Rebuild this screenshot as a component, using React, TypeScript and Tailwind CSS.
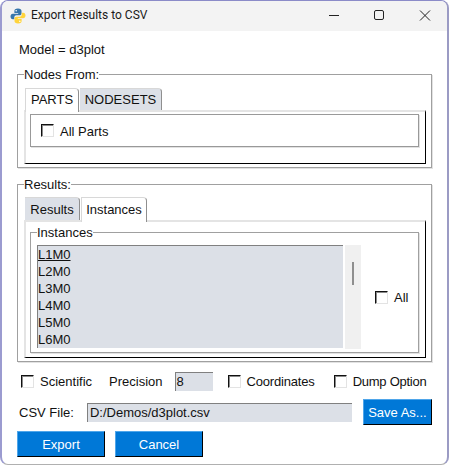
import React from "react";

function Box({ className = "" }: { className?: string }) {
  return (
    <span className={"block w-[13px] h-[13px] shrink-0 bg-white border-t border-l border-r border-b border-t-[#111] border-l-[#111] border-r-[#e3e3e3] border-b-[#e3e3e3] shadow-[inset_1px_1px_0_#8a8a8a] " + className} />
  );
}

function Btn({ label, cls }: { label: string; cls: string }) {
  return (
    <div className={"flex items-center justify-center bg-[#0078d7] text-white border-t border-l border-t-[#4fa6ea] border-l-[#4fa6ea] border-r border-b border-r-black border-b-black " + cls}>
      {label}
    </div>
  );
}

function Tab({ label, active, cls }: { label: string; active?: boolean; cls: string }) {
  return (
    <div className={"flex items-center justify-center h-[22px] rounded-tr-[4px] border-t border-r border-t-[#d8d8d8] border-r-[#8f8f8f] " + (active ? "bg-white border-l border-l-[#d8d8d8] relative z-10 h-[24px] -mb-[2px] pb-[2px] " : "bg-[#dce0e7] ") + cls}>
      {label}
    </div>
  );
}

const frame = "border border-[#a0a0a0] shadow-[1px_1px_0_#e2e2e2] min-w-0";
const panel = "border-t-2 border-l-2 border-t-[#e4e4e4] border-l-[#e4e4e4] border-r border-b border-r-black border-b-black";
const entry = "bg-[#dce0e7] border-t border-l border-t-[#808080] border-l-[#808080]";

const rows = ["L1M0", "L2M0", "L3M0", "L4M0", "L5M0", "L6M0"];

export default function App() {
  return (
    <div className="w-[449px] h-[465px] bg-white overflow-hidden" style={{ fontFamily: '"Liberation Sans", Arial, sans-serif' }}>
      <div className="w-[449px] h-[465px] flex flex-col rounded-[8px] border-t border-l-2 border-r-2 border-b border-t-[#8b8bc8] border-l-[#9b9bd0] border-r-[#9b9bc4] border-b-[#b0b0b0] overflow-hidden text-[13px] leading-[15px] text-[#111]">
        {/* Title bar */}
        <div className="h-[30px] shrink-0 bg-[#f3f3f3] flex items-center pl-[8px]">
          <svg width="16" height="16" viewBox="0 0 16 16" className="shrink-0 -mt-[1px]">
            <path d="M8 .5C5.2.5 4.4 1.6 4.4 3V5H8.2V5.7H2.9C1.4 5.7.5 6.9.5 8.5S1.4 11.3 2.8 11.3H4.3V9.2C4.3 8 5.3 7.2 6.4 7.2H9.6C10.7 7.2 11.5 6.4 11.5 5.4V3C11.5 1.5 10.3.5 8 .5Z" fill="#3776ab" />
            <path d="M8 15.5C10.8 15.5 11.6 14.4 11.6 13V11H7.8V10.3H13.1C14.6 10.3 15.5 9.1 15.5 7.5S14.6 4.7 13.2 4.7H11.7V6.8C11.7 8 10.7 8.8 9.6 8.8H6.4C5.3 8.8 4.5 9.6 4.5 10.6V13C4.5 14.5 5.7 15.5 8 15.5Z" fill="#ffd43b" />
            <circle cx="6.2" cy="2.8" r=".8" fill="#fff" />
            <circle cx="9.8" cy="13.2" r=".8" fill="#fff" />
          </svg>
          <span className="ml-[5px] -mt-[1px] text-[12px] text-[#1a1a1a]" style={{ fontFamily: 'Roboto, sans-serif' }}>Export Results to CSV</span>
          <div className="ml-auto flex items-center">
            <svg width="46" height="30" viewBox="0 0 46 30"><path d="M20 14.5H30" stroke="#222" strokeWidth="1" /></svg>
            <svg width="46" height="30" viewBox="0 0 46 30"><rect x="19.5" y="9.5" width="9" height="9" rx="1.5" fill="none" stroke="#222" strokeWidth="1" /></svg>
            <svg width="46" height="30" viewBox="0 0 46 30"><path d="M19 9.5L29 19.5M29 9.5L19 19.5" stroke="#222" strokeWidth="1" /></svg>
          </div>
        </div>

        <div className="pl-[15px] pr-[15px] flex flex-col">
          <div className="pl-[2px] pt-[11px] h-[36px]">Model = d3plot</div>

          {/* Nodes From */}
          <fieldset className={"h-[101px] pl-[6px] pr-[5px] " + frame}>
            <legend className="text-[13px] leading-[15px] bg-white">Nodes From:</legend>
            <div className="flex gap-[1px] pl-[1px] mt-[6px] items-start h-[22px]">
              <Tab label="PARTS" active cls="w-[54px]" />
              <Tab label="NODESETS" cls="w-[82px]" />
            </div>
            <div className={"h-[54px] pt-[2px] pl-[4px] pr-[6px] " + panel}>
              <div className="h-[33px] border border-[#999] shadow-[1px_1px_0_#e2e2e2] flex items-center pl-[10px] gap-[6px]">
                <Box />
                <span className="pt-[1px]">All Parts</span>
              </div>
            </div>
          </fieldset>

          {/* Results */}
          <fieldset className={"h-[185px] mt-[9px] pl-[6px] pr-[5px] " + frame}>
            <legend className="text-[13px] leading-[15px] bg-white">Results:</legend>
            <div className="flex gap-[1px] pl-[1px] mt-[5px] items-start h-[23px]">
              <Tab label="Results" cls="w-[55px] h-[23px]" />
              <Tab label="Instances" active cls="w-[66px] h-[25px]" />
            </div>
            <div className={"h-[138px] pl-[4px] pr-[6px] pt-[3px] " + panel}>
              <fieldset className={"h-[128px] pl-[6px] " + frame}>
                <legend className="text-[13px] leading-[15px] bg-white">Instances</legend>
                <div className="flex items-stretch h-[104px] mt-[5px]">
                  <div className={"w-[306px] h-[103px] leading-[17px] " + entry}>
                    {rows.map((r, i) => (
                      <div key={r} className="h-[17px]">
                        <span className={i === 0 ? "underline" : ""}>{r}</span>
                      </div>
                    ))}
                  </div>
                  <div className="w-[16px] ml-[2px] bg-[#f0f0f0] flex justify-center pt-[17px]">
                    <div className="w-[2px] h-[23px] bg-[#8f8f8f]" />
                  </div>
                  <div className="flex items-center pl-[14px] gap-[6px]">
                    <Box />
                    <span>All</span>
                  </div>
                </div>
              </fieldset>
            </div>
          </fieldset>

          {/* Options */}
          <div className="flex items-center h-[20px] mt-[9px] pl-[4px] whitespace-nowrap">
            <Box />
            <span className="ml-[6px]">Scientific</span>
            <span className="ml-[17px]">Precision</span>
            <div className={"ml-[12px] w-[38px] h-[19px] pl-[1px] pt-[1px] " + entry}>8</div>
            <Box className="ml-[15px]" />
            <span className="ml-[6px] tracking-[-0.18px]">Coordinates</span>
            <Box className="ml-[19px]" />
            <span className="ml-[6px] tracking-[-0.25px]">Dump Option</span>
          </div>

          {/* CSV */}
          <div className="flex items-center h-[26px] mt-[8px] pl-[2px]">
            <span>CSV File:</span>
            <div className={"ml-[13px] w-[265px] h-[19px] pl-[2px] pt-[1px] " + entry}>D:/Demos/d3plot.csv</div>
            <Btn label="Save As..." cls="ml-[11px] w-[69px] h-[26px]" />
          </div>

          {/* Buttons */}
          <div className="flex gap-[10px] mt-[6px]">
            <Btn label="Export" cls="w-[88px] h-[26px]" />
            <Btn label="Cancel" cls="w-[88px] h-[26px]" />
          </div>
        </div>
      </div>
    </div>
  );
}
